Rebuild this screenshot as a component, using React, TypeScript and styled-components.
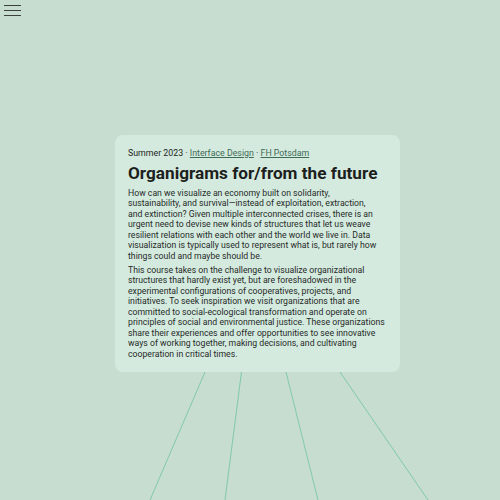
import styled, { createGlobalStyle } from "styled-components";

const GlobalStyle = createGlobalStyle`
    html, body {
        margin: 0;
        padding: 0;
        background: #c6ddd0;
    }
`;

const PAGE = styled.div`
    position: relative;
    width: 500px;
    height: 500px;
    overflow: hidden;
    background: #c6ddd0;
    font-family: "Roboto", "Liberation Sans", sans-serif;
    color: #1c1f1d;
    display: flex;
    align-items: flex-start;
    justify-content: flex-start;
    padding: 135px 0 0 115px;
    box-sizing: border-box;
`;

const MENU = styled.button`
    position: absolute;
    top: 5px;
    left: 4px;
    width: 17px;
    height: 11px;
    padding: 0;
    border: none;
    background: none;
    display: flex;
    flex-direction: column;
    justify-content: space-between;
    z-index: 2;

    & span {
        display: block;
        height: 1.4px;
        width: 17px;
        background: #3b3f3d;
    }
`;

const LINES = styled.svg`
    position: absolute;
    inset: 0;
    z-index: 0;
`;

const CARD = styled.section`
    position: relative;
    z-index: 1;
    width: 285px;
    height: 237px;
    box-sizing: border-box;
    padding: 12px 13px;
    background: #d5eadf;
    border-radius: 8px;
    display: flex;
    flex-direction: column;
`;

const META = styled.p`
    margin: 0;
    font-size: 8.8px;
    line-height: 12px;

    & a {
        color: #3d6b55;
        text-decoration: underline;
    }
`;

const TITLE = styled.h1`
    margin: 3px 0 3.75px;
    font-size: 17.2px;
    font-weight: 700;
    line-height: 22px;
    white-space: nowrap;
`;

const TEXT = styled.p<{ $gap?: number }>`
    margin: 0 0 ${(props) => props.$gap ?? 0}px;
    font-size: 8.7px;
    line-height: 10.5px;
    color: #262a28;
    white-space: nowrap;
`;

export default function App() {
    return (
        <PAGE>
            <GlobalStyle />
            <MENU aria-label="Menu">
                <span />
                <span />
                <span />
            </MENU>
            <LINES width="500" height="500" viewBox="0 0 500 500">
                <g stroke="#6fc49e" strokeWidth="0.8" fill="none">
                    <line x1="205" y1="372" x2="150" y2="500" />
                    <line x1="241.5" y1="372" x2="225" y2="500" />
                    <line x1="286" y1="372" x2="318" y2="500" />
                    <line x1="340" y1="372" x2="428" y2="500" />
                </g>
            </LINES>
            <CARD>
                <META>
                    Summer 2023 · <a href="#">Interface Design</a> · <a href="#">FH Potsdam</a>
                </META>
                <TITLE>Organigrams for/from the future</TITLE>
                <TEXT $gap={3.5}>
                    How can we visualize an economy built on solidarity,<br />
                    sustainability, and survival—instead of exploitation, extraction,<br />
                    and extinction? Given multiple interconnected crises, there is an<br />
                    urgent need to devise new kinds of structures that let us weave<br />
                    resilient relations with each other and the world we live in. Data<br />
                    visualization is typically used to represent what is, but rarely how<br />
                    things could and maybe should be.
                </TEXT>
                <TEXT>
                    This course takes on the challenge to visualize organizational<br />
                    structures that hardly exist yet, but are foreshadowed in the<br />
                    experimental configurations of cooperatives, projects, and<br />
                    initiatives. To seek inspiration we visit organizations that are<br />
                    committed to social-ecological transformation and operate on<br />
                    principles of social and environmental justice. These organizations<br />
                    share their experiences and offer opportunities to see innovative<br />
                    ways of working together, making decisions, and cultivating<br />
                    cooperation in critical times.
                </TEXT>
            </CARD>
        </PAGE>
    );
}
